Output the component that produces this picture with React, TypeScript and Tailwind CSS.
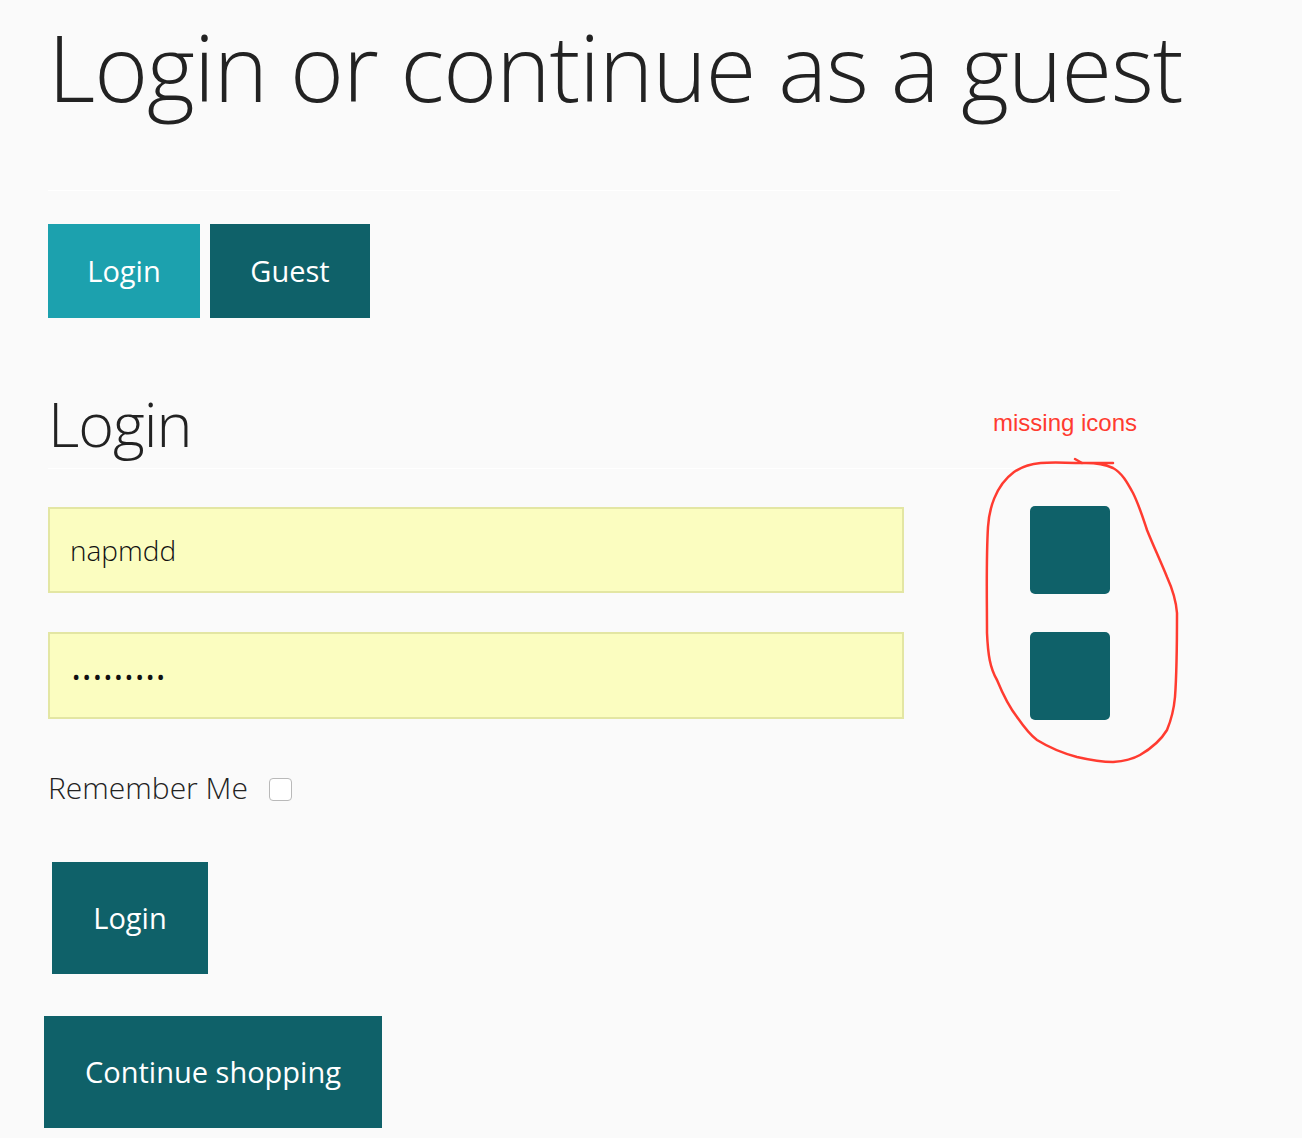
import React from 'react';

const font = { fontFamily: '"Open Sans", "Liberation Sans", sans-serif' };

const IconSlot: React.FC = () => <div className="h-[88px] w-[80px] rounded-[5px] bg-[#0f6169]"></div>;

const MissingIconsNote: React.FC = () => (
  <div className="pointer-events-none absolute left-[980px] top-[400px] h-[370px] w-[210px]">
    <span
      className="absolute left-[13px] top-[11px] text-[24px] leading-none text-[#ff3b30]"
      style={{ fontFamily: '"Liberation Sans", Arial, sans-serif' }}
    >
      missing icons
    </span>
    <svg className="absolute left-0 top-0" width="210" height="370" viewBox="980 400 210 370" fill="none">
      <path
        d="M1113 463 L1077 463 C1050 462 1030 461 1014 472 C995 486 989 510 988 527 C986 560 987 600 987 633 C988 655 990 668 997 680 C1004 697 1010 708 1017 717 C1024 727 1030 735 1037 740 C1050 748 1062 753 1077 757 C1090 760 1102 762 1113 762 C1125 761 1133 759 1140 755 C1152 748 1161 740 1167 730 C1172 718 1174 708 1175 697 C1177 670 1177 640 1177 613 C1176 600 1172 588 1167 577 C1160 560 1153 545 1147 530 C1142 515 1139 505 1133 493 C1127 482 1122 473 1113 468 C1104 464 1095 463 1086 463"
        stroke="#ff3b30"
        strokeWidth="2.5"
        strokeLinecap="round"
        strokeLinejoin="round"
      />
      <path d="M1075 459 L1082 463" stroke="#ff3b30" strokeWidth="2.5" strokeLinecap="round" />
    </svg>
  </div>
);

export default function App() {
  return (
    <div className="relative min-h-[1138px] w-full bg-[#fafafa] text-[#222]" style={font}>
      <div className="w-[1120px] pb-[10px] pl-[48px] pt-[21px]">
        <h1 className="whitespace-nowrap text-[92px] font-light leading-none tracking-[-1px]">
          Login or continue as a guest
        </h1>
        <hr className="mt-[77px] border-0 border-t border-white" />

        <div className="mt-[33px] flex gap-[10px]">
          <button className="h-[94px] w-[152px] bg-[#1ca1ae] text-[29px] text-white">Login</button>
          <button className="h-[94px] w-[160px] bg-[#0f6169] text-[29px] text-white">Guest</button>
        </div>

        <h2 className="mt-[75px] text-[61px] font-light leading-none tracking-[-1px]">Login</h2>
        <hr className="mt-[14px] border-0 border-t border-white" />

        <div className="mt-[37px] flex flex-col gap-[38px]">
          <div className="flex items-start">
            <input
              readOnly
              value="napmdd"
              className="mt-[1px] h-[86px] w-[856px] border-2 border-[#e3e6a3] bg-[#fbfdc0] px-[20px] text-[28px] font-light text-[#111] outline-none"
            />
            <div className="ml-[126px]">
              <IconSlot />
            </div>
          </div>
          <div className="flex items-start">
            <div className="flex h-[87px] w-[856px] items-center border-2 border-[#e3e6a3] bg-[#fbfdc0] px-[22px]">
              <span className="text-[22px] leading-none tracking-[2.3px] text-[#111]">•••••••••</span>
            </div>
            <div className="ml-[126px]">
              <IconSlot />
            </div>
          </div>
        </div>

        <label className="mt-[54px] flex h-[28px] items-center gap-[21px]">
          <span className="text-[30px] font-light leading-none">Remember Me</span>
          <span className="mt-[3px] h-[23px] w-[23px] rounded-[4px] border border-[#b9b9b9] bg-white"></span>
        </label>

        <button className="ml-[4px] mt-[60px] block h-[112px] w-[156px] bg-[#0f6169] text-[29px] text-white">
          Login
        </button>
        <button className="-ml-[4px] mt-[42px] block h-[112px] w-[338px] bg-[#0f6169] text-[29px] text-white">
          Continue shopping
        </button>
      </div>
      <MissingIconsNote />
    </div>
  );
}
